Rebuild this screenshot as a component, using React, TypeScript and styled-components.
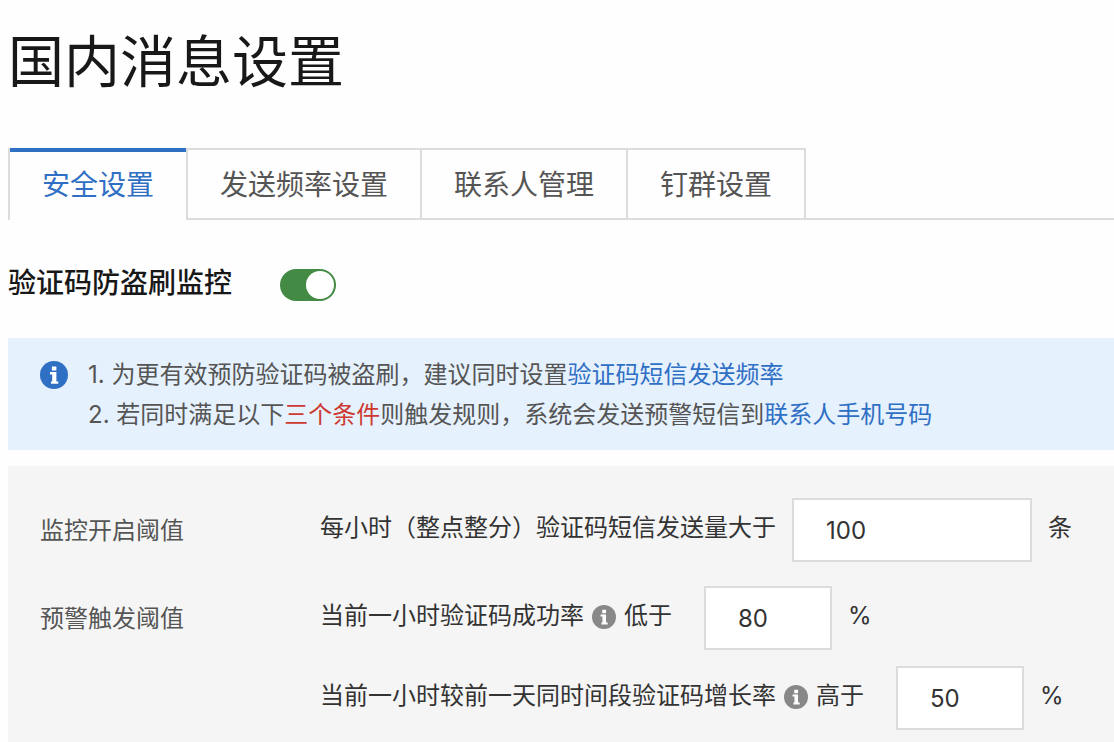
import React, { useState } from 'react';
import styled, { createGlobalStyle } from 'styled-components';

const GlobalStyle = createGlobalStyle`
  *, *::before, *::after { box-sizing: border-box; }
  body {
    margin: 0;
    background: #fefefe;
    color: #333;
    font-family: Inter, "Noto Sans CJK SC", sans-serif;
    font-size: 24px;
    line-height: 40px;
  }
  button, input { font: inherit; color: inherit; }
`;

const Page = styled.main`
  display: flex;
  flex-direction: column;
  min-height: 100vh;
  padding-left: 8px;
`;

const Title = styled.h1`
  margin: 0;
  padding: 26px 0 50px;
  color: #181818;
  font-size: 56px;
  font-weight: 400;
  line-height: 72px;
`;

const TabList = styled.div`
  display: flex;
  height: 72px;

  &::after {
    content: '';
    flex: 1;
    border-bottom: 2px solid #dcdcdc;
    border-left: 2px solid #dcdcdc;
  }
`;

const Tab = styled.button<{ $active: boolean }>`
  display: flex;
  align-items: center;
  padding: 2px 32px 0;
  border: 0 solid #dcdcdc;
  border-left-width: 2px;
  background: ${p => (p.$active
    ? 'linear-gradient(#2f6fc4, #2f6fc4) top / 100% 4px no-repeat padding-box'
    : 'linear-gradient(#dcdcdc, #dcdcdc) top / 100% 2px no-repeat, linear-gradient(#dcdcdc, #dcdcdc) bottom / 100% 2px no-repeat')};
  color: ${p => (p.$active ? '#2f6fc4' : '#555')};
  font-size: 28px;
  white-space: nowrap;
  cursor: pointer;
`;

const SwitchRow = styled.label`
  display: flex;
  align-items: center;
  gap: 48px;
  align-self: flex-start;
  margin: 43px 0 31px;
`;

const SwitchLabel = styled.span`
  padding-bottom: 4px;
  color: #181818;
  font-size: 28px;
  font-weight: 500;
`;

const Switch = styled.input`
  display: flex;
  align-items: center;
  width: 56px;
  height: 32px;
  margin: 0;
  padding: 2px;
  border-radius: 16px;
  appearance: none;
  background: #b5b5b5;
  cursor: pointer;

  &::before {
    content: '';
    width: 28px;
    height: 28px;
    border-radius: 50%;
    background: #fff;
  }
  &:checked {
    justify-content: flex-end;
    background: #438b45;
  }
`;

const Notice = styled.section`
  display: flex;
  gap: 20px;
  padding: 17px 32px 15px;
  background: #e5f1fd;
  color: #555;

  > svg { margin-top: 6px; }
`;

const NoticeLines = styled.div`
  p { margin: 0; }
`;

const Link = styled.a`
  color: #2f6fc4;
  text-decoration: none;
`;

const Alert = styled.span`
  color: #cd3a32;
`;

const Panel = styled.form`
  flex: 1;
  display: flex;
  flex-direction: column;
  gap: 24px;
  margin-top: 16px;
  padding: 32px 32px 12px;
  background: #f5f5f5;
  white-space: nowrap;
`;

const Group = styled.div`
  display: grid;
  grid-template-columns: 280px 1fr;
`;

const GroupName = styled.span`
  padding-top: 12px;
  color: #555;
  line-height: 42px;
`;

const Fields = styled.div`
  display: flex;
  flex-direction: column;
  gap: 16px;
`;

const Field = styled.div`
  display: flex;
  align-items: center;
`;

const FieldLabel = styled.label<{ $gap: number }>`
  display: flex;
  align-items: center;
  gap: 8px;
  margin-right: ${p => p.$gap}px;
  padding-bottom: 4px;

  svg { margin-top: 2px; }
`;

const NumberBox = styled.input<{ $width: number }>`
  width: ${p => p.$width}px;
  height: 64px;
  margin-right: 16px;
  padding: 0 32px;
  border: 2px solid #dcdcdc;
  border-radius: 0;
  background: #fff;
  outline-color: #2f6fc4;
`;

const Unit = styled.span`
  padding-bottom: 4px;
`;

const Icon = styled.svg`
  flex-shrink: 0;
`;

function InfoIcon({ size, color }: { size: number; color: string }) {
  return (
    <Icon width={size} height={size} viewBox="0 0 28 28" aria-hidden="true">
      <circle cx="14" cy="14" r="14" fill={color} />
      <path
        fill="#fff"
        d="M11.9 5.4h4.5v4.2h-4.5zM10 11.1h6.4v9.3h1.9v2.4h-7.3v-2.4h1.2v-6.9H10z"
      />
    </Icon>
  );
}

const tabs = ['安全设置', '发送频率设置', '联系人管理', '钉群设置'];

export default function App() {
  const [active, setActive] = useState(0);
  return (
    <Page>
      <GlobalStyle />
      <Title>国内消息设置</Title>
      <TabList role="tablist">
        {tabs.map((name, i) => (
          <Tab
            key={name}
            type="button"
            role="tab"
            aria-selected={i === active}
            $active={i === active}
            onClick={() => setActive(i)}
          >
            {name}
          </Tab>
        ))}
      </TabList>

      <SwitchRow>
        <SwitchLabel>验证码防盗刷监控</SwitchLabel>
        <Switch type="checkbox" role="switch" defaultChecked />
      </SwitchRow>

      <Notice>
        <InfoIcon size={28} color="#2f6fc4" />
        <NoticeLines>
          <p>1. 为更有效预防验证码被盗刷，建议同时设置<Link href="#rate">验证码短信发送频率</Link></p>
          <p>
            2. 若同时满足以下<Alert>三个条件</Alert>则触发规则，系统会发送预警短信到<Link href="#contacts">联系人手机号码</Link>
          </p>
        </NoticeLines>
      </Notice>

      <Panel>
        <Group>
          <GroupName>监控开启阈值</GroupName>
          <Fields>
            <Field>
              <FieldLabel htmlFor="volume" $gap={16}>每小时（整点整分）验证码短信发送量大于</FieldLabel>
              <NumberBox id="volume" inputMode="numeric" defaultValue="100" $width={240} />
              <Unit>条</Unit>
            </Field>
          </Fields>
        </Group>
        <Group>
          <GroupName>预警触发阈值</GroupName>
          <Fields>
            <Field>
              <FieldLabel htmlFor="success" $gap={32}>
                当前一小时验证码成功率
                <InfoIcon size={24} color="#888" />
                低于
              </FieldLabel>
              <NumberBox id="success" inputMode="numeric" defaultValue="80" $width={128} />
              <Unit>%</Unit>
            </Field>
            <Field>
              <FieldLabel htmlFor="growth" $gap={32}>
                当前一小时较前一天同时间段验证码增长率
                <InfoIcon size={24} color="#888" />
                高于
              </FieldLabel>
              <NumberBox id="growth" inputMode="numeric" defaultValue="50" $width={128} />
              <Unit>%</Unit>
            </Field>
          </Fields>
        </Group>
      </Panel>
    </Page>
  );
}
